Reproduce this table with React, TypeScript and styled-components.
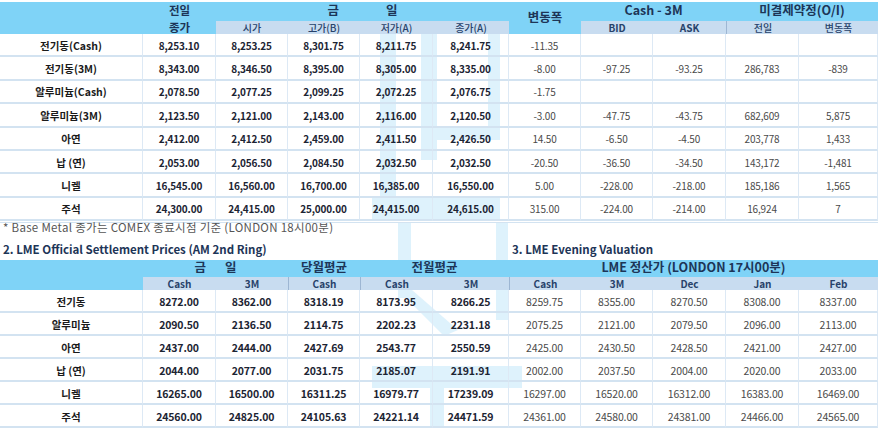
import React from 'react';
import styled, { createGlobalStyle } from 'styled-components';

const GlobalStyle = createGlobalStyle`
  html, body {
    margin: 0;
    padding: 0;
    background: #ffffff;
  }
  body {
    padding-top: 2px;
    font-family: "Noto Sans CJK KR", "Noto Sans", sans-serif;
    color: #1c2433;
  }
`;

const COLUMNS = '143px 73px 72px 72px 73px 76px 72px 72px 73px 73px 79px';

const Page = styled.div`
  position: relative;
  width: 878px;
`;

const Content = styled.div`
  position: relative;
  z-index: 1;
`;

const Watermark = styled.svg`
  position: absolute;
  left: 0;
  top: -2px;
  width: 878px;
  height: 429px;
  z-index: 0;
  pointer-events: none;
`;

const Grid = styled.div<{ $rows: string }>`
  display: grid;
  grid-template-columns: ${COLUMNS};
  grid-template-rows: ${(p) => p.$rows};
`;

const TopGrid = styled(Grid)`
  box-shadow: 0 1px 0 #ffffff, 0 2px 0 #d3e3f1;
`;

const HeadCell = styled.div<{ $col: string; $row: string; $gap?: number }>`
  grid-column: ${(p) => p.$col};
  grid-row: ${(p) => p.$row};
  background: #7fd3f7;
  color: #1d3557;
  font-weight: 700;
  font-size: 12.5px;
  line-height: 1;
  display: flex;
  align-items: center;
  justify-content: center;
  gap: ${(p) => p.$gap ?? 0}px;
  padding-bottom: 2px;
  white-space: nowrap;
`;

const StackedHead = styled(HeadCell)`
  flex-direction: column;
  font-size: 11.5px;
  line-height: 17px;
  padding: 1px 0 0;

  & > span {
    display: block;
  }
`;

const SubCell = styled.div<{ $divider?: boolean; $bold?: boolean }>`
  background: #c8dcf0;
  color: #27426a;
  font-size: 10px;
  font-weight: ${(p) => (p.$bold ? 700 : 500)};
  line-height: 1;
  display: flex;
  align-items: center;
  justify-content: center;
  border-left: ${(p) => (p.$divider ? '1px solid #9db6d3' : 'none')};
`;

const Cell = styled.div<{ $bold?: boolean; $label?: boolean; $size: number }>`
  display: flex;
  align-items: center;
  justify-content: center;
  border-right: 1px solid #dde9f5;
  border-bottom: 2px solid #d3e3f1;
  font-size: ${(p) => (p.$label ? 10.5 : p.$size)}px;
  letter-spacing: ${(p) => (p.$label ? 0 : -0.15)}px;
  font-weight: ${(p) => (p.$bold || p.$label ? 700 : 400)};
  color: ${(p) => (p.$label ? '#1a1a1a' : p.$bold ? '#1c2433' : '#4a4a4a')};
  white-space: nowrap;
  padding-top: 1px;
`;

const Note = styled.div`
  height: 13px;
  line-height: 13px;
  padding-left: 3px;
  font-size: 11.5px;
  letter-spacing: 0.3px;
  color: #555555;
  white-space: nowrap;
`;

const TitleRow = styled.div`
  display: grid;
  grid-template-columns: 509px 369px;
  margin: 9px 0 4px;
  height: 13px;
`;

const SectionTitle = styled.div`
  padding-left: 3px;
  font-size: 11.5px;
  line-height: 13px;
  font-weight: 700;
  color: #1d3557;
  white-space: nowrap;
`;

const topRows: string[][] = [
  ['전기동(Cash)', '8,253.10', '8,253.25', '8,301.75', '8,211.75', '8,241.75', '-11.35', '', '', '', ''],
  ['전기동(3M)', '8,343.00', '8,346.50', '8,395.00', '8,305.00', '8,335.00', '-8.00', '-97.25', '-93.25', '286,783', '-839'],
  ['알루미늄(Cash)', '2,078.50', '2,077.25', '2,099.25', '2,072.25', '2,076.75', '-1.75', '', '', '', ''],
  ['알루미늄(3M)', '2,123.50', '2,121.00', '2,143.00', '2,116.00', '2,120.50', '-3.00', '-47.75', '-43.75', '682,609', '5,875'],
  ['아연', '2,412.00', '2,412.50', '2,459.00', '2,411.50', '2,426.50', '14.50', '-6.50', '-4.50', '203,778', '1,433'],
  ['납 (연)', '2,053.00', '2,056.50', '2,084.50', '2,032.50', '2,032.50', '-20.50', '-36.50', '-34.50', '143,172', '-1,481'],
  ['니켈', '16,545.00', '16,560.00', '16,700.00', '16,385.00', '16,550.00', '5.00', '-228.00', '-218.00', '185,186', '1,565'],
  ['주석', '24,300.00', '24,415.00', '25,000.00', '24,415.00', '24,615.00', '315.00', '-224.00', '-214.00', '16,924', '7'],
];

const bottomRows: string[][] = [
  ['전기동', '8272.00', '8362.00', '8318.19', '8173.95', '8266.25', '8259.75', '8355.00', '8270.50', '8308.00', '8337.00'],
  ['알루미늄', '2090.50', '2136.50', '2114.75', '2202.23', '2231.18', '2075.25', '2121.00', '2079.50', '2096.00', '2113.00'],
  ['아연', '2437.00', '2444.00', '2427.69', '2543.77', '2550.59', '2425.00', '2430.50', '2428.50', '2421.00', '2427.00'],
  ['납 (연)', '2044.00', '2077.00', '2031.75', '2185.07', '2191.91', '2002.00', '2037.50', '2004.00', '2020.00', '2033.00'],
  ['니켈', '16265.00', '16500.00', '16311.25', '16979.77', '17239.09', '16297.00', '16520.00', '16312.00', '16383.00', '16469.00'],
  ['주석', '24560.00', '24825.00', '24105.63', '24221.14', '24471.59', '24361.00', '24580.00', '24381.00', '24466.00', '24565.00'],
];

const DataRow: React.FC<{ values: string[]; size: number }> = ({ values, size }) => (
  <>
    {values.map((v, i) => (
      <Cell key={i} $label={i === 0} $bold={i > 0 && i < 6} $size={size}>
        {v}
      </Cell>
    ))}
  </>
);

const WatermarkArt = () => (
  <Watermark viewBox="0 0 878 429">
    <g fill="#bfe7fb" opacity="0.5">
      <rect x="380" y="34" width="16" height="182" />
      <rect x="421" y="34" width="16" height="126" />
      <rect x="488" y="34" width="12" height="106" />
      <rect x="421" y="126" width="79" height="14" />
      <rect x="372" y="196" width="128" height="25" />
      <rect x="398" y="222" width="13" height="76" />
      <polygon points="398,290 412,290 458,330 444,336" />
      <rect x="496" y="222" width="12" height="98" />
      <rect x="372" y="366" width="150" height="22" />
      <rect x="430" y="388" width="14" height="41" />
    </g>
  </Watermark>
);

export default function App() {
  return (
    <Page>
      <GlobalStyle />
      <WatermarkArt />
      <Content>
        <TopGrid $rows="19px 13px repeat(8, 23.4px)">
          <HeadCell $col="1" $row="1 / 3" />
          <StackedHead $col="2" $row="1 / 3">
            <span>전일</span>
            <span>종가</span>
          </StackedHead>
          <HeadCell $col="3 / 7" $row="1" $gap={47}>
            <span>금</span>
            <span>일</span>
          </HeadCell>
          <HeadCell $col="7" $row="1 / 3">변동폭</HeadCell>
          <HeadCell $col="8 / 10" $row="1">Cash - 3M</HeadCell>
          <HeadCell $col="10 / 12" $row="1">미결제약정(O/I)</HeadCell>
          <SubCell style={{ gridColumn: 3 }}>시가</SubCell>
          <SubCell>고가(B)</SubCell>
          <SubCell>저가(A)</SubCell>
          <SubCell>종가(A)</SubCell>
          <SubCell style={{ gridColumn: 8 }} $bold>BID</SubCell>
          <SubCell $bold>ASK</SubCell>
          <SubCell $divider>전일</SubCell>
          <SubCell>변동폭</SubCell>
          {topRows.map((r) => (
            <DataRow key={r[0]} values={r} size={10} />
          ))}
        </TopGrid>

        <Note>* Base Metal 종가는 COMEX 종료시점 기준 (LONDON 18시00분)</Note>

        <TitleRow>
          <SectionTitle>2. LME Official Settlement Prices (AM 2nd Ring)</SectionTitle>
          <SectionTitle>3. LME Evening Valuation</SectionTitle>
        </TitleRow>

        <Grid $rows="17px 13px repeat(6, 23px)">
          <HeadCell $col="1" $row="1 / 3" />
          <HeadCell $col="2 / 4" $row="1" $gap={19}>
            <span>금</span>
            <span>일</span>
          </HeadCell>
          <HeadCell $col="4" $row="1">당월평균</HeadCell>
          <HeadCell $col="5 / 7" $row="1">전월평균</HeadCell>
          <HeadCell $col="7 / 12" $row="1">LME 정산가 (LONDON 17시00분)</HeadCell>
          <SubCell style={{ gridColumn: 2 }} $bold>Cash</SubCell>
          <SubCell $bold>3M</SubCell>
          <SubCell $bold $divider>Cash</SubCell>
          <SubCell $bold $divider>Cash</SubCell>
          <SubCell $bold>3M</SubCell>
          <SubCell $bold $divider>Cash</SubCell>
          <SubCell $bold>3M</SubCell>
          <SubCell $bold>Dec</SubCell>
          <SubCell $bold>Jan</SubCell>
          <SubCell $bold>Feb</SubCell>
          {bottomRows.map((r) => (
            <DataRow key={r[0]} values={r} size={10.5} />
          ))}
        </Grid>
      </Content>
    </Page>
  );
}
